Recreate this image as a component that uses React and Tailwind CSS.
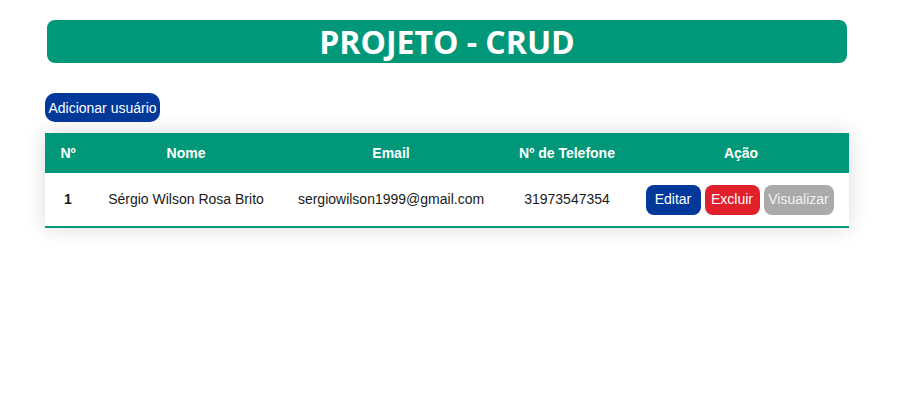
import React from 'react';

const users = [
    { id: 1, nome: 'Sérgio Wilson Rosa Brito', email: 'sergiowilson1999@gmail.com', telefone: '31973547354' },
];

export default function App() {
    return (
        <div className="min-h-screen bg-white pt-5" style={{ fontFamily: '"Liberation Sans", Arial, sans-serif' }}>
            <header className="mx-[47px] w-[800px] h-[43px] rounded-lg bg-[#009879] flex items-center justify-center">
                <h1 className="text-white text-[32px] font-bold leading-none" style={{ fontFamily: '"Open Sans", "Noto Sans", sans-serif' }}>
                    PROJETO - CRUD
                </h1>
            </header>

            <div className="ml-[45px] mt-[30px] w-[804px]">
                <button className="w-[115px] h-[29px] rounded-[10px] bg-[#02389a] text-white text-[14px] leading-none">
                    Adicionar usuário
                </button>

                <table className="mt-[11px] w-[804px] table-fixed border-collapse text-[14px] shadow-[0_0_20px_rgba(0,0,0,0.15)]">
                    <colgroup>
                        <col className="w-[46px]" />
                        <col className="w-[190px]" />
                        <col className="w-[220px]" />
                        <col className="w-[132px]" />
                        <col className="w-[216px]" />
                    </colgroup>
                    <thead>
                        <tr className="bg-[#009879] text-white h-[40px]">
                            <th className="font-bold text-center">Nº</th>
                            <th className="font-bold text-center">Nome</th>
                            <th className="font-bold text-center">Email</th>
                            <th className="font-bold text-center">Nº de Telefone</th>
                            <th className="font-bold text-center">Ação</th>
                        </tr>
                    </thead>
                    <tbody>
                        {users.map((u) => (
                            <tr key={u.id} className="h-[54px] border-b-2 border-[#009879] text-[#1a1a1a]">
                                <td className="text-center font-bold">{u.id}</td>
                                <td className="text-center">{u.nome}</td>
                                <td className="text-center">{u.email}</td>
                                <td className="text-center">{u.telefone}</td>
                                <td className="text-center">
                                    <div className="flex justify-center gap-1 pr-[3px]">
                                        <button className="w-[55px] h-[30px] rounded-lg bg-[#02389a] text-white">Editar</button>
                                        <button className="w-[55px] h-[30px] rounded-lg bg-[#e0202a] text-white">Excluir</button>
                                        <button className="w-[70px] h-[30px] rounded-lg bg-[#aaaaaa] text-[#f2f2f2]">Visualizar</button>
                                    </div>
                                </td>
                            </tr>
                        ))}
                    </tbody>
                </table>
            </div>
        </div>
    );
}
